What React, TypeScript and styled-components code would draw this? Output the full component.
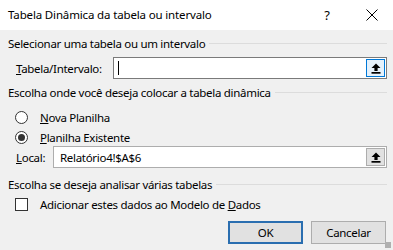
import React from "react";
import styled, { createGlobalStyle } from "styled-components";

const GlobalStyle = createGlobalStyle`
  html, body {
    margin: 0;
    padding: 0;
    background: #f0f0f0;
  }
  body {
    font-family: "Segoe UI", "Noto Sans", "Open Sans", sans-serif;
    font-size: 11.5px;
    letter-spacing: -0.15px;
    color: #000;
  }
`;

function UploadIcon() {
  return (
    <svg width="10" height="11" viewBox="0 0 10 11">
      <path d="M5 0.5 L9.5 5 H6.6 V8 H3.4 V5 H0.5 Z" fill="#000" />
      <rect x="0.5" y="9" width="9" height="1.7" fill="#000" />
    </svg>
  );
}

function CloseIcon() {
  return (
    <svg width="12" height="12" viewBox="0 0 12 12">
      <path d="M0.5 0.5 L11.5 11.5 M11.5 0.5 L0.5 11.5" stroke="#000" strokeWidth="1" />
    </svg>
  );
}

function GroupHeader({ title, top }: { title: string; top: number }) {
  return (
    <Group $top={top}>
      <span>{title}</span>
      <GroupLine />
    </Group>
  );
}

export default function App() {
  return (
    <>
      <GlobalStyle />
      <Window>
        <TitleBar>
          <Title>Tabela Dinâmica da tabela ou intervalo</Title>
          <TitleButton $width={48}>?</TitleButton>
          <TitleButton $width={42}>
            <CloseIcon />
          </TitleButton>
        </TitleBar>

        <Body>
          <GroupHeader title="Selecionar uma tabela ou um intervalo" top={5} />
          <FieldRow $top={6}>
            <FieldLabel $width={97}>
              <u>T</u>abela/Intervalo:
            </FieldLabel>
            <Input $focused>
              <Caret />
              <RefButton $active>
                <UploadIcon />
              </RefButton>
            </Input>
          </FieldRow>

          <GroupHeader title="Escolha onde você deseja colocar a tabela dinâmica" top={5} />
          <OptionRow $top={8}>
            <Radio />
            <span>
              <u>N</u>ova Planilha
            </span>
          </OptionRow>
          <OptionRow $top={2}>
            <Radio $checked />
            <span>
              <u>P</u>lanilha Existente
            </span>
          </OptionRow>
          <FieldRow $top={0}>
            <FieldLabel $width={37}>
              <u>L</u>ocal:
            </FieldLabel>
            <Input>
              <InputText>Relatório4!$A$6</InputText>
              <RefButton>
                <UploadIcon />
              </RefButton>
            </Input>
          </FieldRow>

          <GroupHeader title="Escolha se deseja analisar várias tabelas" top={8} />
          <OptionRow $top={3}>
            <Checkbox />
            <span>
              Adicionar estes dados ao Modelo de <u>D</u>ados
            </span>
          </OptionRow>

          <ButtonRow>
            <DialogButton $primary>OK</DialogButton>
            <DialogButton>Cancelar</DialogButton>
          </ButtonRow>
        </Body>
        <Grip />
      </Window>
    </>
  );
}

/* Styles */

const Window = styled.div`
  position: relative;
  width: 393px;
  height: 250px;
  display: flex;
  flex-direction: column;
  background: #f0f0f0;
  overflow: hidden;
`;

const TitleBar = styled.div`
  height: 30px;
  display: flex;
  align-items: center;
  background: #fff;
  padding-left: 8px;
`;

const Title = styled.div`
  flex: 1;
  padding-bottom: 2px;
`;

const TitleButton = styled.div<{ $width: number }>`
  width: ${(p) => p.$width}px;
  height: 30px;
  display: flex;
  align-items: center;
  justify-content: center;
  font-size: 13px;
`;

const Body = styled.div`
  display: flex;
  flex-direction: column;
  padding: 0 6px 0 8px;
  letter-spacing: -0.3px;
`;

const Group = styled.div<{ $top: number }>`
  margin-top: ${(p) => p.$top}px;
  height: 16px;
  display: flex;
  align-items: center;
  gap: 4px;
  white-space: nowrap;
`;

const GroupLine = styled.div`
  flex: 1;
  height: 1px;
  background: #dcdcdc;
  margin-top: 1px;
`;

const FieldRow = styled.div<{ $top: number }>`
  margin-top: ${(p) => p.$top}px;
  height: 22px;
  display: flex;
  align-items: center;
  padding-left: 8px;
`;

const FieldLabel = styled.div<{ $width: number }>`
  width: ${(p) => p.$width}px;
  white-space: nowrap;
`;

const Input = styled.div<{ $focused?: boolean }>`
  flex: 1;
  height: 22px;
  box-sizing: border-box;
  display: flex;
  align-items: center;
  background: #fff;
  border: 1px solid ${(p) => (p.$focused ? "#7a7a7a" : "#adadad")};
  padding: 0 1px 0 4px;
`;

const Caret = styled.div`
  width: 1px;
  height: 14px;
  background: #000;
  margin-right: auto;
`;

const InputText = styled.div`
  margin-right: auto;
  padding-left: 2px;
`;

const RefButton = styled.div<{ $active?: boolean }>`
  width: 19px;
  height: 18px;
  box-sizing: border-box;
  display: flex;
  align-items: center;
  justify-content: center;
  border: 1px solid ${(p) => (p.$active ? "#0078d7" : "#adadad")};
  background: ${(p) => (p.$active ? "#e5f1fb" : "#e1e1e1")};
`;

const OptionRow = styled.div<{ $top: number }>`
  margin-top: ${(p) => p.$top}px;
  height: 18px;
  display: flex;
  align-items: center;
  gap: 8px;
  padding-left: 7px;
`;

const Radio = styled.div<{ $checked?: boolean }>`
  width: 13px;
  height: 13px;
  box-sizing: border-box;
  border: 1px solid #333;
  border-radius: 50%;
  background: #fff;
  display: flex;
  align-items: center;
  justify-content: center;
  margin-right: 4px;

  &::after {
    content: "";
    width: 7px;
    height: 7px;
    border-radius: 50%;
    background: ${(p) => (p.$checked ? "#333" : "transparent")};
  }
`;

const Checkbox = styled.div`
  width: 13px;
  height: 13px;
  box-sizing: border-box;
  border: 1px solid #333;
  background: #fff;
  margin-right: 4px;
`;

const ButtonRow = styled.div`
  margin-top: 8px;
  display: flex;
  justify-content: flex-end;
  gap: 8px;
  padding-right: 1px;
`;

const DialogButton = styled.div<{ $primary?: boolean }>`
  width: 75px;
  height: 23px;
  box-sizing: border-box;
  display: flex;
  align-items: center;
  justify-content: center;
  background: #e1e1e1;
  border: ${(p) => (p.$primary ? "2px solid #2a6eb0" : "1px solid #adadad")};
`;

const Grip = styled.div`
  position: absolute;
  right: 2px;
  bottom: 2px;
  width: 6px;
  height: 6px;
  background-image: radial-gradient(circle, #b0b0b0 0.8px, transparent 1px);
  background-size: 2px 2px;
`;
